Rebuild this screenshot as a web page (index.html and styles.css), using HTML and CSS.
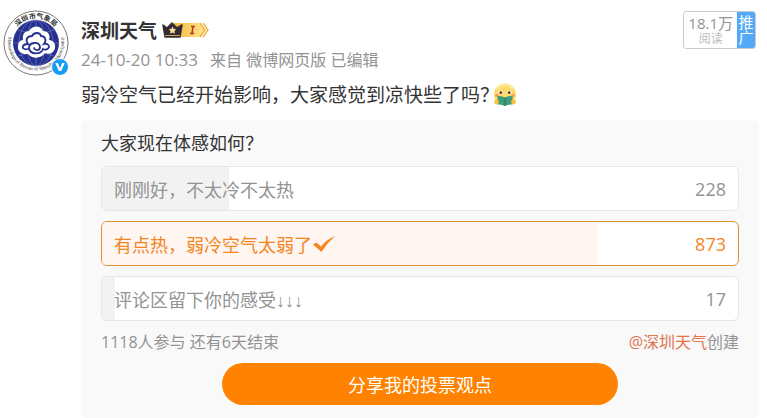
FILE: index.html
```html
<!DOCTYPE html>
<html lang="zh-CN">
  <head>
    <meta charset="UTF-8" />
    <meta name="viewport" content="width=device-width, initial-scale=1.0" />
    <title>深圳天气的微博</title>
    <link rel="stylesheet" href="styles.css">
  </head>
  <body>
    <article class="post">
      <a class="avatar" href="#" aria-label="深圳天气">
        <svg class="avatar-img" viewBox="0 0 66 66">
          <defs>
            <path id="arc-top" d="M8.500 33a24.500 24.500 0 0 1 49 0" />
            <path id="arc-bottom" d="M6 25a28 28 0 1 0 54 0" />
          </defs>
          <circle cx="33" cy="33" r="32" fill="#fff" stroke="#777" stroke-width="1" />
          <circle cx="33" cy="33" r="23" fill="#26318f" />
          <g fill="none" stroke="#8b93cf" stroke-width=".5">
            <ellipse cx="33" cy="33" rx="9" ry="23" />
            <ellipse cx="33" cy="33" rx="17" ry="23" />
            <path d="M33 10v46M10 33h46M15 20q18 7 36 0M15 46q18-7 36 0" />
          </g>
          <path d="M25 44c-6 1-11-3-10-8 0-4 3-6 5-6-1-6 2-9 6-9 3-6 12-6 14 0 5 0 8 4 6 9 4 0 7 4 6 8-1 5-6 7-10 5-4 6-13 6-17 1z" fill="#fff" />
          <g fill="none" stroke="#26318f" stroke-width="1.800" stroke-linecap="round">
            <path d="M25 39c-4 1-6-1-5-3 1-2 3-2 5-2-3-4-1-8 4-8 2-4 8-4 9 0 4 0 6 4 3 8 3-1 5 1 5 3-1 3-4 3-6 2-2 6-13 6-14-1 0-6 10-7 11-1 0 4-5 4-6 1" />
          </g>
          <text class="seal-cn"><textPath href="#arc-top" startOffset="50%">深圳市气象局</textPath></text>
          <text class="seal-en"><textPath href="#arc-bottom" startOffset="50%">Meteorological Bureau of Shenzhen Municipality</textPath></text>
        </svg>
        <svg class="verified" viewBox="0 0 18 18">
          <circle cx="9" cy="9" r="8.500" fill="#169df3" stroke="#fff" />
          <path d="M4.300 5h2.500L9 10.300 11.200 5h2.500L10.200 13H7.800z" fill="#fff" />
        </svg>
      </a>

      <div class="main">
        <header class="head">
          <div>
            <div class="name-row">
              <a class="name" href="#">深圳天气</a>
              <svg class="level" viewBox="0 0 50 18">
                <defs>
                  <linearGradient id="gold" x2="1">
                    <stop offset="0" stop-color="#f5b93c" />
                    <stop offset="1" stop-color="#ffe391" />
                  </linearGradient>
                </defs>
                <path d="M13 2h26l5 7-5 7H13z" fill="url(#gold)" />
                <path d="M39 2l5 7-5 7M42 2l5 7-5 7" fill="none" stroke="#edb13b" stroke-width="1.300" />
                <path d="M2 4l4 3 5-5 5 5 5-3-2 12H4z" fill="#332c33" stroke="#332c33" stroke-width="1.500" stroke-linejoin="round" />
                <path d="M4 14.500h15" stroke="#d3a052" />
                <path d="M11.500 5.500l1.200 2.400 2.600.4-1.900 1.800.4 2.600-2.300-1.200-2.300 1.200.4-2.600-1.900-1.800 2.600-.4z" fill="#ffe3a2" />
                <path d="M30 5.500h4M29 12.500h4M32 5.500l-1 7" fill="none" stroke="#b93b16" stroke-width="1.500" />
              </svg>
            </div>
            <div class="info">
              <a class="time" href="#">24-10-20 10:33</a>
              <span class="source">来自 <a href="#">微博网页版</a> 已编辑</span>
            </div>
          </div>
          <div class="reads">
            <div class="reads-count">
              <span class="reads-num">18.1万</span>
              <span class="reads-label">阅读</span>
            </div>
            <button class="promote" type="button">推广</button>
          </div>
        </header>

        <p class="text">
          弱冷空气已经开始影响，大家感觉到凉快些了吗？
          <svg class="emoji" viewBox="0 0 24 24">
            <circle cx="12" cy="11.500" r="11" fill="#fcdc68" />
            <path d="M4 6q3-4 8-4t8 4" fill="none" stroke="#ffeb9c" stroke-width="2" />
            <circle cx="7.500" cy="9.500" r="2.300" fill="#fff3cf" />
            <circle cx="16.500" cy="9.500" r="2.300" fill="#fff3cf" />
            <circle cx="7.800" cy="9.700" r="1.400" fill="#5b3a22" />
            <circle cx="16.200" cy="9.700" r="1.400" fill="#5b3a22" />
            <circle cx="4" cy="12.500" r="1.800" fill="#f8a05b" />
            <circle cx="20" cy="12.500" r="1.800" fill="#f8a05b" />
            <path d="M4.500 13q4.500-.5 7.500 1.500 3-2 7.500-1.500v8.500q-4.500-.5-7.500 1.500-3-2-7.500-1.500z" fill="#3f9b7c" />
            <path d="M12 14.500V23" stroke="#277458" />
            <circle cx="3.500" cy="19" r="2.400" fill="#f6c43b" />
            <circle cx="20.500" cy="19" r="2.400" fill="#f6c43b" />
          </svg>
        </p>

        <section class="vote">
          <h2 class="vote-title">大家现在体感如何？</h2>
          <div class="options">
            <button class="option" type="button">
              <span class="bar" style="width: 20%"></span>
              <span class="label">刚刚好，不太冷不太热</span>
              <span class="count">228</span>
            </button>
            <button class="option chosen" type="button" aria-pressed="true">
              <span class="bar" style="width: 78%"></span>
              <span class="label">有点热，弱冷空气太弱了</span>
              <svg class="check" viewBox="0 0 24 18">
                <path d="M1 9.500l3.500-2L9 11.500Q14 5 23 1 15 8 9.500 17z" fill="#f5861f" />
              </svg>
              <span class="count">873</span>
            </button>
            <button class="option" type="button">
              <span class="bar" style="width: 2%"></span>
              <span class="label">评论区留下你的感受<span class="arrows">↓↓↓</span></span>
              <span class="count">17</span>
            </button>
          </div>
          <div class="vote-info">
            <span>1118人参与 还有6天结束</span>
            <span><a class="creator" href="#">@深圳天气</a>创建</span>
          </div>
          <button class="share" type="button">分享我的投票观点</button>
        </section>
      </div>
    </article>
  </body>
</html>
```
FILE: styles.css
```css
* {
  box-sizing: border-box;
}
body {
  margin: 0;
  background: #fff;
  color: #333;
  font-family: "Open Sans", "Noto Sans CJK SC", sans-serif;
  font-size: 16px;
}
a {
  color: inherit;
  text-decoration: none;
}
button {
  margin: 0;
  border: 0;
  font: inherit;
  cursor: pointer;
}
svg {
  display: block;
  flex-shrink: 0;
}
.post {
  display: flex;
  gap: 12px;
  padding: 10px 8px 0 3px;
}
.avatar {
  position: relative;
  flex-shrink: 0;
  width: 66px;
  height: 66px;
}
.avatar-img {
  width: 66px;
  height: 66px;
}
.seal-cn,
.seal-en {
  text-anchor: middle;
  fill: #333;
}
.seal-cn {
  font-size: 7px;
  font-weight: bold;
}
.seal-en {
  font-family: "Liberation Serif", serif;
  font-size: 5px;
}
.verified {
  position: absolute;
  right: 0;
  bottom: 0;
  width: 18px;
  height: 18px;
}
.main {
  flex: 1;
  min-width: 0;
}
.head {
  display: flex;
  justify-content: space-between;
  align-items: flex-start;
}
.name-row {
  display: flex;
  align-items: center;
  gap: 4px;
  height: 40px;
}
.name {
  font-size: 19px;
  font-weight: bold;
}
.level {
  width: 50px;
  height: 18px;
}
.info {
  display: flex;
  align-items: baseline;
  gap: 12px;
  color: #939393;
  line-height: 20px;
}
.time {
  font-size: 17px;
}
.reads {
  display: flex;
  height: 38px;
  margin: 1px 3px 0 0;
  border: 1px solid #ccc;
  border-radius: 3px;
  overflow: hidden;
}
.reads-count {
  display: flex;
  flex-direction: column;
  align-items: center;
  padding: 3px 4px 0;
  color: #939393;
}
.reads-num {
  font-size: 15px;
  line-height: 16px;
}
.reads-label {
  color: #bbb;
  font-size: 12px;
  line-height: 16px;
}
.promote {
  width: 18px;
  padding: 0 1px;
  background: #52a9f8;
  color: #fff;
  font-size: 15px;
  line-height: 15px;
}
.text {
  display: flex;
  align-items: center;
  margin: 10px 0;
  font-size: 19px;
  line-height: 30px;
}
.emoji {
  width: 24px;
  height: 24px;
  margin-left: -6px;
}
.vote {
  padding: 8px 20px 13px;
  border-radius: 6px;
  background: #f9f9f9;
}
.vote-title {
  margin: 0 0 8px;
  font-size: 18px;
  font-weight: normal;
  line-height: 30px;
}
.options {
  display: flex;
  flex-direction: column;
  gap: 10px;
}
.option {
  position: relative;
  display: flex;
  align-items: center;
  width: 100%;
  height: 45px;
  padding: 0 12px;
  border: 1px solid #e6e6e6;
  border-radius: 6px;
  background: #fff;
  color: #939393;
  font-size: 18px;
  overflow: hidden;
}
/* share of votes, drawn behind the label */
.bar {
  position: absolute;
  top: 0;
  bottom: 0;
  left: 0;
  background: #f2f2f2;
}
.label,
.check,
.count {
  position: relative;
}
.count {
  margin-left: auto;
}
.chosen {
  border-color: #dc9235;
  color: #f5861f;
}
.chosen .bar {
  background: #fff5f1;
}
.check {
  width: 24px;
  height: 18px;
}
.arrows {
  font-family: "Liberation Sans", sans-serif;
}
.vote-info {
  display: flex;
  justify-content: space-between;
  margin: 10px 0;
  color: #939393;
  line-height: 22px;
}
.creator {
  color: #e07550;
}
.share {
  display: block;
  width: 62%;
  height: 42px;
  margin: 0 auto;
  border-radius: 21px;
  background: #ff8200;
  color: #fff;
  font-size: 18px;
}
```
